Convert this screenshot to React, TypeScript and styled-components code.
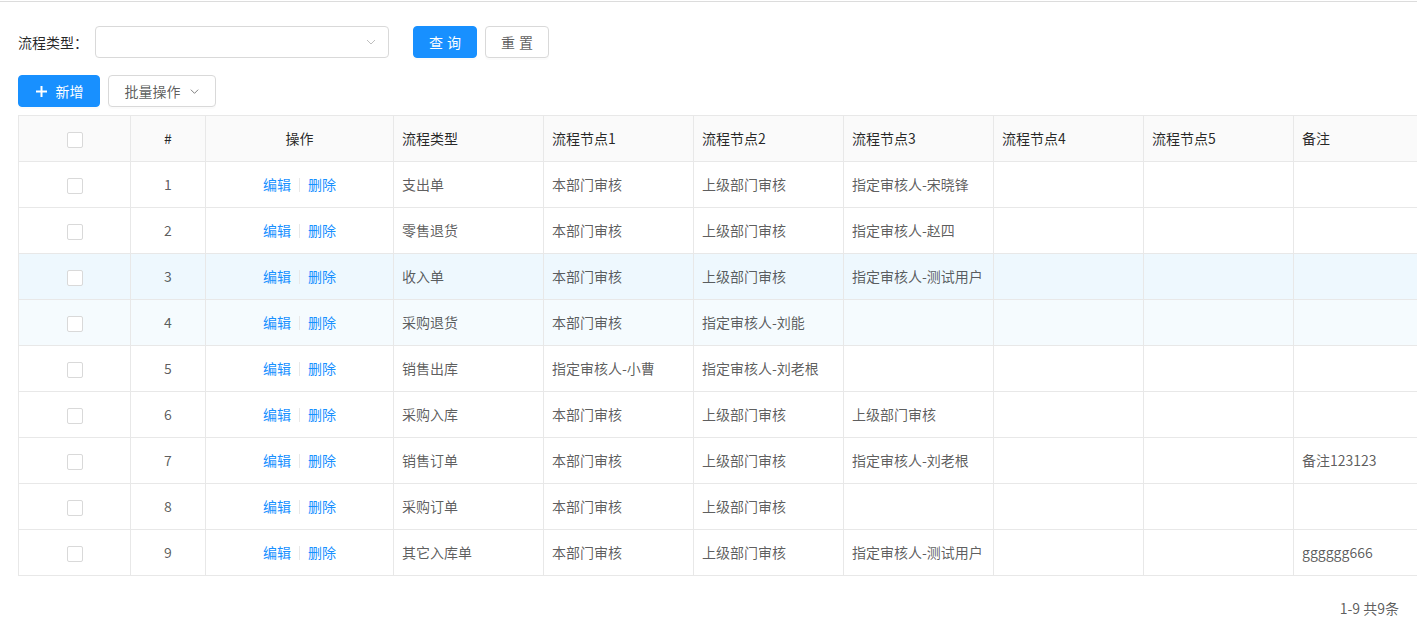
import styled, { createGlobalStyle } from 'styled-components'

const GlobalStyle = createGlobalStyle`
  html, body {
    margin: 0;
    padding: 0;
    background: #fff;
    overflow-x: hidden;
  }
  body {
    font-family: "Noto Sans CJK SC", "Noto Sans", "Liberation Sans", sans-serif;
    font-size: 14px;
    color: rgba(0, 0, 0, 0.65);
  }
  * { box-sizing: border-box; }
`

const TopLine = styled.div`
  margin-top: 1px;
  height: 1px;
  background: #dcdcdc;
`

const Page = styled.div`
  padding: 24px 18px 0 18px;
`

const FilterBar = styled.div`
  display: flex;
  align-items: center;
  height: 32px;
`

const Label = styled.label`
  width: 77px;
  color: rgba(0, 0, 0, 0.85);
  font-size: 14px;
  line-height: 32px;
  white-space: nowrap;
`

const Select = styled.div`
  width: 294px;
  height: 32px;
  border: 1px solid #d9d9d9;
  border-radius: 4px;
  background: #fff;
  display: flex;
  align-items: center;
  justify-content: flex-end;
  padding-right: 11px;
  color: #bfbfbf;
`

const Button = styled.button<{ $primary?: boolean; $width?: number }>`
  height: 32px;
  width: ${(p) => (p.$width ? `${p.$width}px` : 'auto')};
  padding: 0 15px;
  border-radius: 4px;
  border: 1px solid ${(p) => (p.$primary ? '#1890ff' : '#d9d9d9')};
  background: ${(p) => (p.$primary ? '#1890ff' : '#fff')};
  color: ${(p) => (p.$primary ? '#fff' : 'rgba(0, 0, 0, 0.65)')};
  font-family: inherit;
  font-size: 14px;
  display: inline-flex;
  align-items: center;
  justify-content: center;
  gap: 8px;
  cursor: pointer;
  box-shadow: 0 2px 0 rgba(0, 0, 0, 0.015);
  white-space: nowrap;
`

const SpacedText = styled.span`
  letter-spacing: 4px;
  margin-right: -4px;
`

const Actions = styled.div`
  display: flex;
  gap: 8px;
  align-items: center;
  margin-left: 24px;
`

const Toolbar = styled.div`
  display: flex;
  gap: 8px;
  margin-top: 17px;
`

const TableWrap = styled.div`
  margin-top: 8px;
  margin-right: -18px;
  overflow: hidden;
`

const Table = styled.table`
  border-collapse: collapse;
  table-layout: fixed;
  width: 1425px;
  border-left: 1px solid #e8e8e8;
  border-top: 1px solid #e8e8e8;
`

const Th = styled.th<{ $center?: boolean }>`
  background: #fafafa;
  color: rgba(0, 0, 0, 0.85);
  font-weight: 400;
  text-align: ${(p) => (p.$center ? 'center' : 'left')};
  padding: 12px 8px;
  line-height: 21px;
  border-right: 1px solid #e8e8e8;
  border-bottom: 1px solid #e8e8e8;
  white-space: nowrap;
`

const Tr = styled.tr<{ $bg?: string }>`
  background: ${(p) => p.$bg || '#fff'};
`

const Td = styled.td<{ $center?: boolean }>`
  text-align: ${(p) => (p.$center ? 'center' : 'left')};
  padding: 12px 8px;
  line-height: 21px;
  border-right: 1px solid #e8e8e8;
  border-bottom: 1px solid #e8e8e8;
  white-space: nowrap;
  overflow: hidden;
`

const Checkbox = styled.span`
  display: inline-block;
  width: 16px;
  height: 16px;
  border: 1px solid #d9d9d9;
  border-radius: 2px;
  background: #fff;
  vertical-align: middle;
`

const LinkText = styled.a`
  color: #1890ff;
  text-decoration: none;
  cursor: pointer;
`

const Divider = styled.span`
  display: inline-block;
  width: 1px;
  height: 14px;
  margin: 0 8px;
  background: #e8e8e8;
  vertical-align: middle;
  position: relative;
  top: -1px;
`

const Caret = styled.span`
  display: inline-flex;
  color: rgba(0, 0, 0, 0.55);
`

const Pager = styled.div`
  display: flex;
  justify-content: flex-end;
  align-items: center;
  height: 32px;
  margin-top: 16px;
  color: rgba(0, 0, 0, 0.65);
`

const Chevron = ({ size = 12 }: { size?: number }) => (
  <svg width={size} height={size} viewBox="0 0 12 12" fill="none">
    <path d="M2 4 L6 8 L10 4" stroke="currentColor" strokeWidth="1" />
  </svg>
)

const Plus = () => (
  <svg width="13" height="13" viewBox="0 0 13 13">
    <path d="M6.5 1 V12 M1 6.5 H12" stroke="#fff" strokeWidth="2" />
  </svg>
)

const columns = ['流程类型', '流程节点1', '流程节点2', '流程节点3', '流程节点4', '流程节点5', '备注']

const rows: string[][] = [
  ['支出单', '本部门审核', '上级部门审核', '指定审核人-宋晓锋', '', '', ''],
  ['零售退货', '本部门审核', '上级部门审核', '指定审核人-赵四', '', '', ''],
  ['收入单', '本部门审核', '上级部门审核', '指定审核人-测试用户', '', '', ''],
  ['采购退货', '本部门审核', '指定审核人-刘能', '', '', '', ''],
  ['销售出库', '指定审核人-小曹', '指定审核人-刘老根', '', '', '', ''],
  ['采购入库', '本部门审核', '上级部门审核', '上级部门审核', '', '', ''],
  ['销售订单', '本部门审核', '上级部门审核', '指定审核人-刘老根', '', '', '备注123123'],
  ['采购订单', '本部门审核', '上级部门审核', '', '', '', ''],
  ['其它入库单', '本部门审核', '上级部门审核', '指定审核人-测试用户', '', '', 'gggggg666'],
]

// rows 3 and 4 carry the hover tint seen in the screenshot
const rowBg: Record<number, string> = { 2: '#eef8fe', 3: '#f5fbfe' }

export default function App() {
  return (
    <>
      <GlobalStyle />
      <TopLine />
      <Page>
        <FilterBar>
          <Label>流程类型：</Label>
          <Select>
            <Chevron />
          </Select>
          <Actions>
            <Button $primary $width={64}>
              <SpacedText>查询</SpacedText>
            </Button>
            <Button $width={64}>
              <SpacedText>重置</SpacedText>
            </Button>
          </Actions>
        </FilterBar>

        <Toolbar>
          <Button $primary $width={82}>
            <Plus />
            新增
          </Button>
          <Button $width={108}>
            批量操作
            <Caret>
              <Chevron size={11} />
            </Caret>
          </Button>
        </Toolbar>

        <TableWrap>
          <Table>
            <colgroup>
              <col style={{ width: 112 }} />
              <col style={{ width: 75 }} />
              <col style={{ width: 188 }} />
              {columns.map((c) => (
                <col key={c} style={{ width: 150 }} />
              ))}
            </colgroup>
            <thead>
              <tr>
                <Th $center>
                  <Checkbox />
                </Th>
                <Th $center>#</Th>
                <Th $center>操作</Th>
                {columns.map((c) => (
                  <Th key={c}>{c}</Th>
                ))}
              </tr>
            </thead>
            <tbody>
              {rows.map((r, i) => (
                <Tr key={i} $bg={rowBg[i]}>
                  <Td $center>
                    <Checkbox />
                  </Td>
                  <Td $center>{i + 1}</Td>
                  <Td $center>
                    <LinkText>编辑</LinkText>
                    <Divider />
                    <LinkText>删除</LinkText>
                  </Td>
                  {r.map((v, j) => (
                    <Td key={j}>{v}</Td>
                  ))}
                </Tr>
              ))}
            </tbody>
          </Table>
        </TableWrap>

        <Pager>1-9 共9条</Pager>
      </Page>
    </>
  )
}
